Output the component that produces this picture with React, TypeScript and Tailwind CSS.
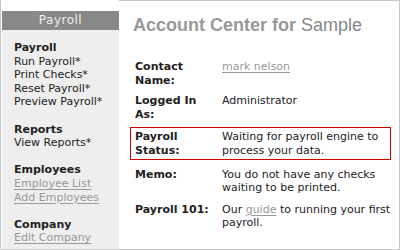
import React from "react";

const font = { fontFamily: '"DejaVu Sans", Verdana, sans-serif' };

function Section({ title, items, links, last }: { title: string; items: string[]; links?: boolean; last?: boolean }) {
  return (
    <div className={last ? "" : "mb-[13.6px]"}>
      <div className="font-bold text-[#222]">{title}</div>
      {items.map((it) => (
        <div key={it} className={links ? "text-[#999] underline underline-offset-[2px]" : "text-[#222]"}>
          {it}
        </div>
      ))}
    </div>
  );
}

function Row({ label, children, className }: { label: React.ReactNode; children: React.ReactNode; className?: string }) {
  return (
    <div className={"flex pl-[4px] border " + (className ?? "border-transparent")}>
      <div className="w-[87px] shrink-0 font-bold text-[#222]">{label}</div>
      <div className="flex-1 text-[#222] whitespace-nowrap">{children}</div>
    </div>
  );
}

export default function App() {
  return (
    <div
      className="w-[400px] h-[250px] flex bg-white border-l border-r border-b border-[#c8c8c8] text-[11px] leading-[13.6px] overflow-hidden"
      style={font}
    >
      <div className="w-[117px] ml-[1px] mt-[11px] bg-[#eeeeee] flex flex-col shrink-0">
        <div className="h-[19px] shrink-0 bg-[#888888] text-[#eeeeee] text-[12px] flex items-center justify-center tracking-[0.5px]">
          Payroll
        </div>
        <div className="pl-[12px] pt-[11px] shrink-0">
          <Section title="Payroll" items={["Run Payroll*", "Print Checks*", "Reset Payroll*", "Preview Payroll*"]} />
          <Section title="Reports" items={["View Reports*"]} />
          <Section title="Employees" items={["Employee List", "Add Employees"]} links />
          <Section title="Company" items={["Edit Company"]} links last />
        </div>
      </div>
      <div className="flex-1 border-t border-[#c8c8c8] pl-[11px] pr-[10px]">
        <div
          className="mt-[13px] ml-[3px] text-[18px] leading-[22px] font-bold text-[#999999] whitespace-nowrap"
          style={{ fontFamily: '"Liberation Sans", Arial, sans-serif' }}
        >
          Account Center for <span className="font-normal text-[#888888]">Sample</span>
        </div>
        <div className="mt-[23px]">
          <Row label={<>Contact<br />Name:</>}>
            <span className="text-[#999] underline underline-offset-[2px]">mark nelson</span>
          </Row>
        </div>
        <div className="mt-[5px]">
          <Row label={<>Logged In<br />As:</>}>Administrator</Row>
        </div>
        <div className="mt-[5px]">
          <Row label={<>Payroll<br />Status:</>} className="border-[#cc0000] pt-[2px] pb-[1px]">
            Waiting for payroll engine to<br />process your data.
          </Row>
        </div>
        <div className="mt-[7px]">
          <Row label="Memo:">
            You do not have any checks<br />waiting to be printed.
          </Row>
        </div>
        <div className="mt-[6px]">
          <Row label="Payroll 101:">
            Our <span className="text-[#999] underline underline-offset-[2px]">guide</span> to running your first<br />payroll.
          </Row>
        </div>
      </div>
    </div>
  );
}
